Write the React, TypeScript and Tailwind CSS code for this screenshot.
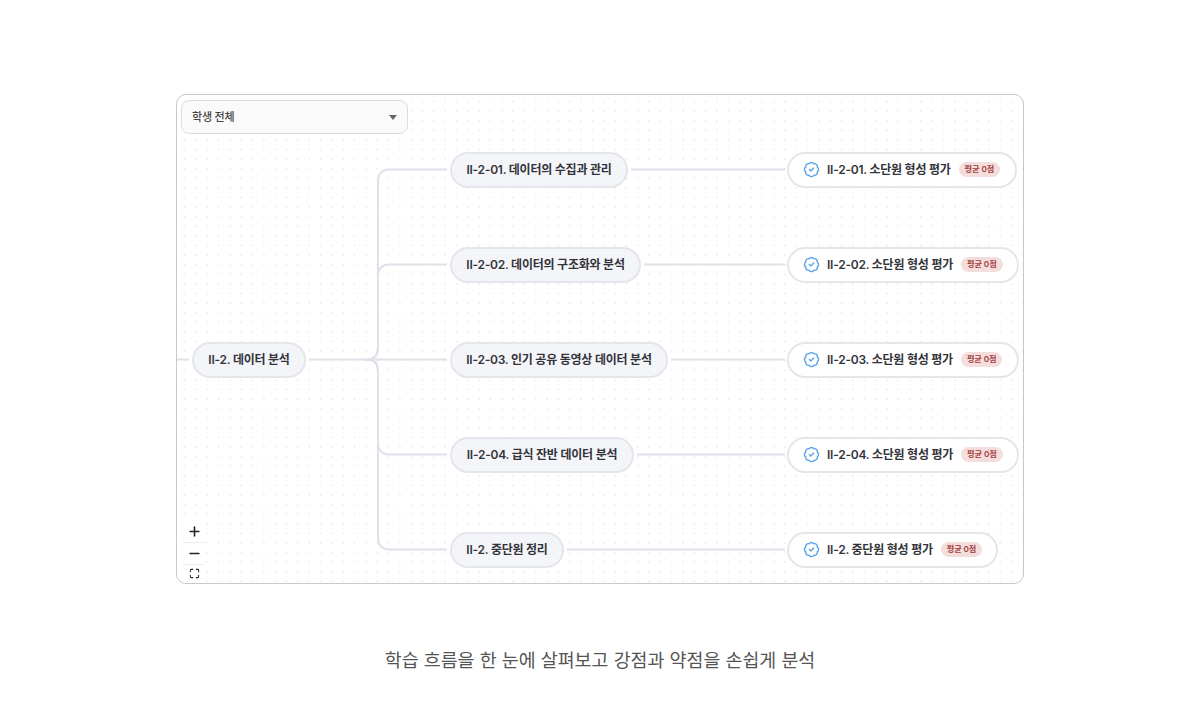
import { Maximize, Minus, Plus } from "lucide-react";

const font = "font-['Inter','Noto_Sans_CJK_KR',sans-serif]";

interface Row {
  y: number;
  topic: string;
  topicWidth: number;
  quiz: string;
  quizWidth: number;
}

const rows: Row[] = [
  { y: 74.5, topic: "II-2-01. 데이터의 수집과 관리", topicWidth: 178, quiz: "II-2-01. 소단원 형성 평가", quizWidth: 230 },
  { y: 169.5, topic: "II-2-02. 데이터의 구조화와 분석", topicWidth: 191, quiz: "II-2-02. 소단원 형성 평가", quizWidth: 232 },
  { y: 264.5, topic: "II-2-03. 인기 공유 동영상 데이터 분석", topicWidth: 218, quiz: "II-2-03. 소단원 형성 평가", quizWidth: 232 },
  { y: 359.5, topic: "II-2-04. 급식 잔반 데이터 분석", topicWidth: 184, quiz: "II-2-04. 소단원 형성 평가", quizWidth: 232 },
  { y: 454.5, topic: "II-2. 중단원 정리", topicWidth: 114, quiz: "II-2. 중단원 형성 평가", quizWidth: 211 },
];

function CheckBadge() {
  return (
    <svg width="17" height="17" viewBox="0 0 24 24" fill="none" stroke="#5aa5ea" strokeWidth="2" strokeLinecap="round" strokeLinejoin="round" className="shrink-0">
      <path d="M3.85 8.62a4 4 0 0 1 4.78-4.77 4 4 0 0 1 6.74 0 4 4 0 0 1 4.78 4.78 4 4 0 0 1 0 6.74 4 4 0 0 1-4.77 4.78 4 4 0 0 1-6.75 0 4 4 0 0 1-4.78-4.77 4 4 0 0 1 0-6.76Z" />
      <path d="m9 12 2 2 4-4" />
    </svg>
  );
}

function Edges() {
  const mid = 264.5;
  return (
    <svg width="848" height="490" className="absolute left-0 top-0" fill="none" stroke="#e0e2e9" strokeWidth="2">
      <path d="M0 264.5H12" />
      <path d="M132 264.5H190" />
      {rows.map((row) => {
        const d =
          row.y === mid
            ? `M190 ${mid}H270`
            : row.y < mid
              ? `M190 ${mid}Q201 ${mid} 201 ${mid - 12}V${row.y + 12}Q201 ${row.y} 213 ${row.y}H270`
              : `M190 ${mid}Q201 ${mid} 201 ${mid + 12}V${row.y - 12}Q201 ${row.y} 213 ${row.y}H270`;
        return <path d={d} key={row.topic} />;
      })}
      {rows.map((row) => (
        <path d={`M${273 + row.topicWidth + 3} ${row.y}H608`} key={row.quiz} />
      ))}
    </svg>
  );
}

export default function App() {
  return (
    <div className={`${font} h-[713px] w-full overflow-hidden bg-white pt-[94px]`}>
      <div className="relative mx-auto h-[490px] w-[848px] overflow-hidden rounded-[10px] border border-[#c8c8c8] bg-white bg-[radial-gradient(#ececec_0.7px,transparent_0.9px)] bg-[size:11.33px_9.6px] bg-[position:2px_1.8px]">
        <Edges />

        <div className="absolute left-[4px] top-[5px] flex h-[34px] w-[227px] items-center justify-between rounded-lg border border-[#dcdcdc] bg-[#fafafa] pl-[10px] pr-[10px] text-[11px] font-medium tracking-[-0.2px] text-[#444]">
          <span>학생 전체</span>
          <span className="h-0 w-0 border-x-[4.5px] border-t-[5px] border-x-transparent border-t-[#666]" />
        </div>

        <div className="absolute left-[15px] top-[246.5px] flex h-[36px] w-[114px] items-center justify-center rounded-full border-2 border-[#e4e6ec] bg-[#f4f5f9] text-[12px] font-semibold tracking-[-0.24px] text-[#33343a]">
          II-2. 데이터 분석
        </div>

        {rows.map((row) => (
          <div
            key={row.topic + "-node"}
            className="absolute left-[273px] flex h-[36px] -translate-y-1/2 items-center justify-center whitespace-nowrap rounded-full border-2 border-[#e4e6ec] bg-[#f4f5f9] text-[12px] font-semibold tracking-[-0.24px] text-[#33343a]"
            style={{ top: row.y, width: row.topicWidth }}
          >
            {row.topic}
          </div>
        ))}

        {rows.map((row) => (
          <div
            key={row.quiz + "-node"}
            className="absolute left-[610px] flex h-[36px] -translate-y-1/2 items-center gap-[7px] whitespace-nowrap rounded-full border-2 border-[#e4e6ec] bg-white pl-[14px] text-[12px] font-semibold tracking-[-0.24px] text-[#33343a]"
            style={{ top: row.y, width: row.quizWidth }}
          >
            <CheckBadge />
            <span>{row.quiz}</span>
            <span className="ml-[1px] flex h-[15px] items-center rounded-full bg-[#f4dedd] px-[6px] text-[8.2px] font-semibold tracking-[-0.1px] text-[#a5403d]">평균 0점</span>
          </div>
        ))}

        <div className="absolute bottom-0 left-[6px] flex w-[22px] flex-col bg-white text-[#222]">
          <div className="flex h-[22px] items-center justify-center border-b border-[#eeeeee]">
            <Plus size={15} strokeWidth={2.5} />
          </div>
          <div className="flex h-[22px] items-center justify-center border-b border-[#eeeeee]">
            <Minus size={15} strokeWidth={2.5} />
          </div>
          <div className="flex h-[18px] items-center justify-center pb-[1px]">
            <Maximize size={11} strokeWidth={2.2} />
          </div>
        </div>
      </div>

      <p className="mt-[63px] text-center text-[18.4px] leading-[26px] text-[#555]">학습 흐름을 한 눈에 살펴보고 강점과 약점을 손쉽게 분석</p>
    </div>
  );
}
